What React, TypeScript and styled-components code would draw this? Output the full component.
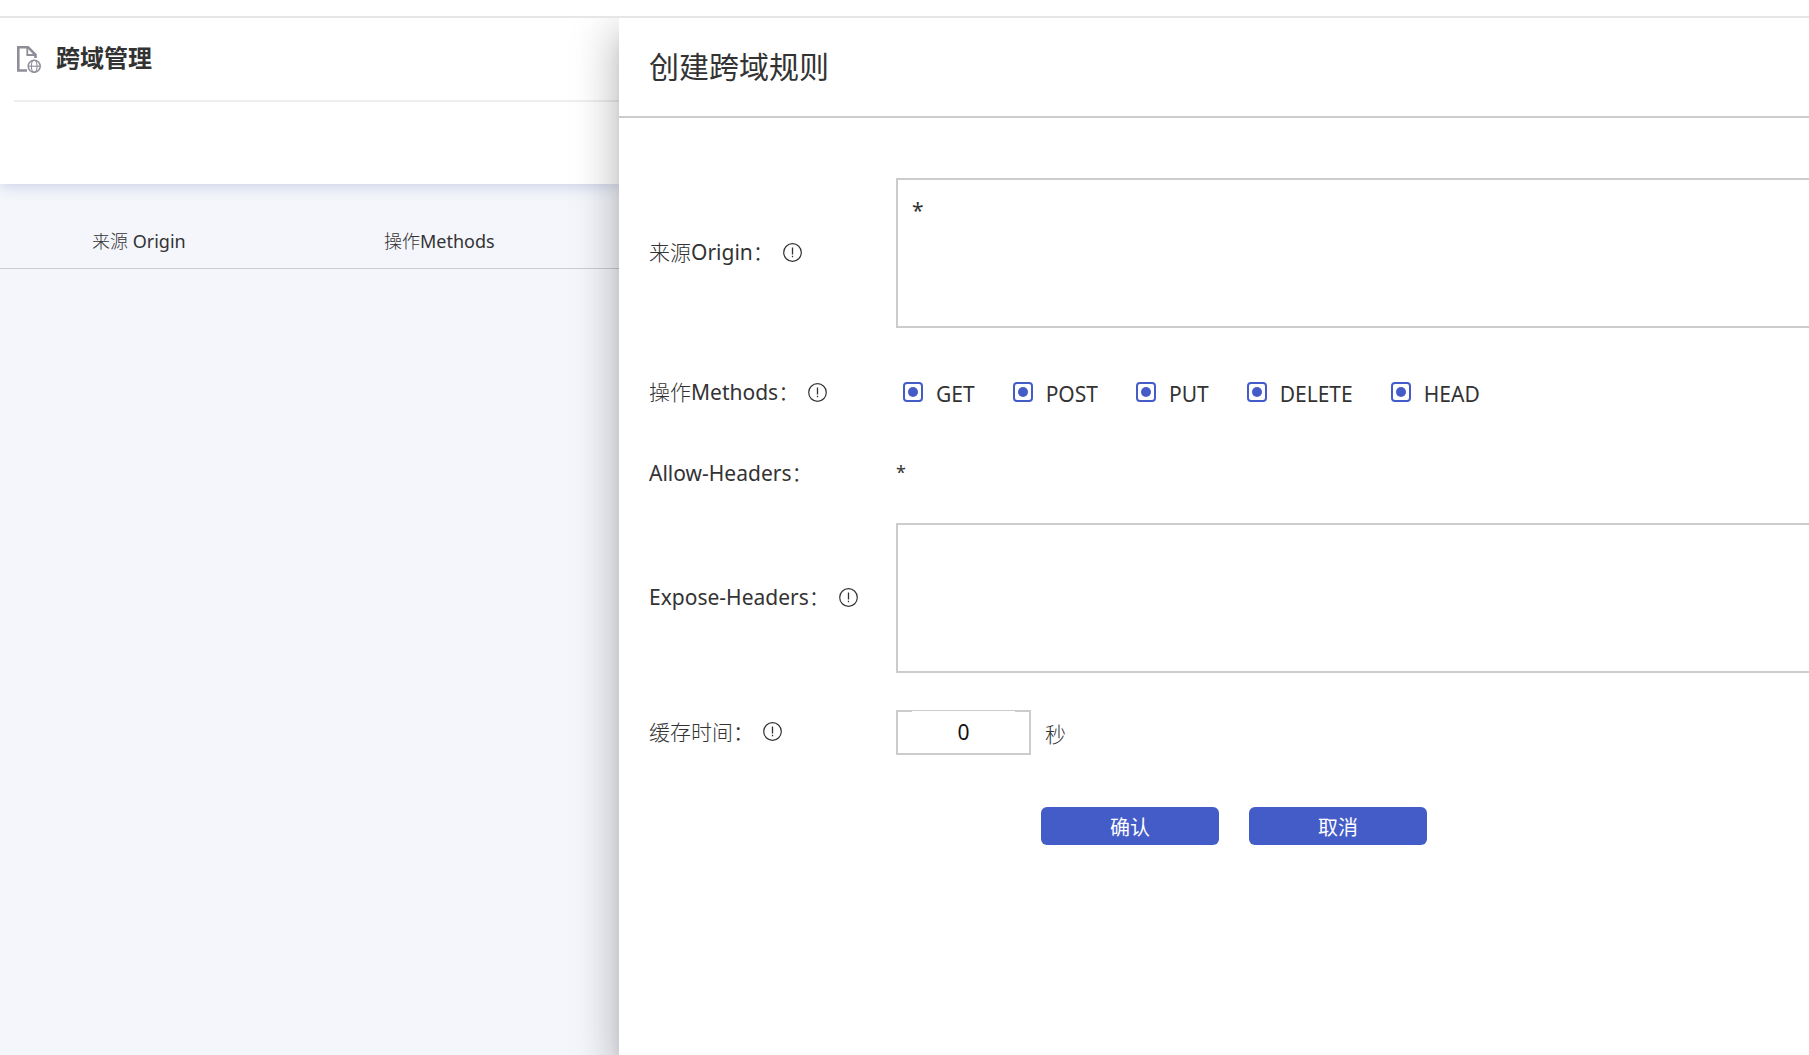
import React, { useState } from "react";
import styled, { createGlobalStyle } from "styled-components";

const GlobalStyle = createGlobalStyle`
  *, *::before, *::after { box-sizing: border-box; }
  body {
    margin: 0;
    background: #fff;
    color: #333;
    font-family: "Noto Sans", "Noto Sans CJK SC Light", "Noto Sans CJK SC", sans-serif;
    font-size: 21px;
  }
`;

const Page = styled.div`
  display: flex;
  flex-direction: column;
  min-height: 100vh;
`;

const TopBar = styled.header`
  height: 18px;
  border-bottom: 2px solid #e6e6e6;
`;

const Body = styled.main`
  flex: 1;
  display: flex;
  overflow: hidden;
`;

const ListPane = styled.section`
  flex: 0 0 619px;
  display: flex;
  flex-direction: column;
  background: #f4f6fb;
`;

const ListHeader = styled.div`
  height: 166px;
  padding-left: 14px;
  background: #fff;
  box-shadow: 0 2px 14px #c9cde6;
`;

const ListTitle = styled.div`
  display: flex;
  align-items: center;
  gap: 14px;
  height: 84px;
  padding-left: 3px;
  border-bottom: 2px solid #eee;
`;

const Heading = styled.h1`
  margin: 0;
  padding-bottom: 4px;
  font-family: "Noto Sans CJK SC", sans-serif;
  font-size: 24px;
  line-height: 36px;
  font-weight: 700;
`;

const RuleTable = styled.table`
  width: 100%;
  table-layout: fixed;
  border-collapse: collapse;
`;

const HeadCell = styled.th`
  height: 84px;
  padding: 31px 0 0 92px;
  border-bottom: 1px solid #ccc;
  font-size: 18px;
  line-height: 24px;
  font-weight: 400;
  text-align: left;
`;

const FirstCol = styled.col`
  width: 292px;
`;

const Drawer = styled.section`
  flex: 1;
  margin-right: -40px;
  background: #fff;
  z-index: 1;
  box-shadow:
    0 12px 15px -8px rgba(0, 0, 0, 0.2),
    0 24px 36px 3px rgba(0, 0, 0, 0.14),
    0 9px 45px 8px rgba(0, 0, 0, 0.12);
`;

const DrawerHeader = styled.div`
  display: flex;
  align-items: center;
  height: 100px;
  padding: 0 0 4px 30px;
  border-bottom: 2px solid #ccc;
`;

const DrawerTitle = styled.h2`
  margin: 0;
  font-family: "Noto Sans CJK SC", sans-serif;
  font-size: 30px;
  line-height: 40px;
  font-weight: 400;
`;

const Form = styled.form`
  padding: 60px 30px 0;
`;

const Rows = styled.div`
  display: grid;
  gap: 37px;
`;

const Row = styled.div<{ $height?: number }>`
  display: grid;
  grid-template-columns: 247px 1fr;
  align-items: center;
  min-height: ${(p) => p.$height ?? 28}px;
`;

const LabelCell = styled.div`
  display: flex;
  align-items: center;
  gap: 9px;
  padding-bottom: 2px;
  line-height: 26px;
`;

const PlainLabel = styled.div`
  padding-top: 2px;
  line-height: 26px;
`;

const TextArea = styled.textarea`
  display: block;
  width: 100%;
  height: 150px;
  padding: 12px 14px;
  border: 2px solid #ccc;
  border-radius: 0;
  outline: none;
  resize: none;
  background: #fff;
  color: #333;
  font: inherit;
  line-height: 36px;
`;

const Methods = styled.div`
  display: flex;
  gap: 38px;
  padding-left: 7px;
`;

const Method = styled.label`
  display: flex;
  align-items: center;
  gap: 13px;
  padding-top: 2px;
  line-height: 28px;
`;

const Tick = styled.input`
  appearance: none;
  display: grid;
  place-items: center;
  width: 20px;
  height: 20px;
  margin: 0 0 4px;
  border: 2px solid #445cc8;
  border-radius: 4px;
  background: #fff;

  &:checked::before {
    content: "";
    width: 10px;
    height: 10px;
    border-radius: 50%;
    background: #445cc8;
  }
`;

const FixedValue = styled.span`
  font-size: 18px;
  line-height: 24px;
`;

const Duration = styled.div`
  display: flex;
  align-items: center;
  gap: 14px;
`;

const NumberBox = styled.div`
  display: flex;
  width: 135px;
  height: 45px;
  padding: 0 14px;
  border: 2px solid #ccc;
`;

const NumberInput = styled.input`
  width: 100%;
  height: 42px;
  margin-top: -1px;
  padding: 0;
  border: 0;
  outline: none;
  background: #fff;
  color: #111;
  font: inherit;
  text-align: center;
`;

const Actions = styled.div`
  display: flex;
  justify-content: center;
  gap: 30px;
  margin-top: 52px;
`;

const ActionButton = styled.button`
  width: 178px;
  height: 38px;
  padding: 2px 0 0;
  border: 0;
  border-radius: 6px;
  background: #445cc8;
  color: #fff;
  font-family: "Noto Sans CJK SC", sans-serif;
  font-size: 20px;
  line-height: 28px;
`;

const FileGlobeIcon = () => (
  <svg width="25" height="27" viewBox="0 0 25 27" fill="none" stroke="#8f8d98" aria-hidden="true">
    <path d="M10 24.5H1.3V1.2H11L18.5 8.8V12" strokeWidth="2.6" />
    <path d="M10.3 1.5V9H18.5" strokeWidth="1.8" />
    <circle cx="17.2" cy="20.2" r="6" strokeWidth="1.5" />
    <ellipse cx="17.2" cy="20.2" rx="2.8" ry="6" strokeWidth="1.1" />
    <path d="M11.2 20.2H23.2" strokeWidth="1.1" />
  </svg>
);

const InfoIcon = () => (
  <svg width="19" height="19" viewBox="0 0 19 19" fill="none" stroke="#333" aria-hidden="true">
    <circle cx="9.5" cy="9.5" r="8.8" strokeWidth="1.2" />
    <path d="M9.5 4.5V11.5M9.5 12.8V14.2" strokeWidth="1.3" />
  </svg>
);

const METHODS = ["GET", "POST", "PUT", "DELETE", "HEAD"];

export default function App() {
  const [origin, setOrigin] = useState("*");
  const [expose, setExpose] = useState("");
  const [maxAge, setMaxAge] = useState("0");

  return (
    <Page>
      <GlobalStyle />
      <TopBar />
      <Body>
        <ListPane>
          <ListHeader>
            <ListTitle>
              <FileGlobeIcon />
              <Heading>跨域管理</Heading>
            </ListTitle>
          </ListHeader>
          <RuleTable>
            <colgroup>
              <FirstCol />
              <col />
            </colgroup>
            <thead>
              <tr>
                <HeadCell scope="col">来源 Origin</HeadCell>
                <HeadCell scope="col">操作Methods</HeadCell>
              </tr>
            </thead>
          </RuleTable>
        </ListPane>
        <Drawer>
          <DrawerHeader>
            <DrawerTitle>创建跨域规则</DrawerTitle>
          </DrawerHeader>
          <Form onSubmit={(e) => e.preventDefault()}>
            <Rows>
              <Row>
                <LabelCell>
                  <label htmlFor="origin">来源Origin：</label>
                  <InfoIcon />
                </LabelCell>
                <TextArea id="origin" value={origin} onChange={(e) => setOrigin(e.target.value)} />
              </Row>
              <Row $height={56} role="group" aria-labelledby="methods">
                <LabelCell>
                  <span id="methods">操作Methods：</span>
                  <InfoIcon />
                </LabelCell>
                <Methods>
                  {METHODS.map((name) => (
                    <Method key={name}>
                      <Tick type="checkbox" defaultChecked />
                      {name}
                    </Method>
                  ))}
                </Methods>
              </Row>
              <Row>
                <PlainLabel>Allow-Headers：</PlainLabel>
                <FixedValue>*</FixedValue>
              </Row>
              <Row>
                <LabelCell>
                  <label htmlFor="expose">Expose-Headers：</label>
                  <InfoIcon />
                </LabelCell>
                <TextArea id="expose" value={expose} onChange={(e) => setExpose(e.target.value)} />
              </Row>
              <Row>
                <LabelCell>
                  <label htmlFor="max-age">缓存时间：</label>
                  <InfoIcon />
                </LabelCell>
                <Duration>
                  <NumberBox>
                    <NumberInput
                      id="max-age"
                      inputMode="numeric"
                      value={maxAge}
                      onChange={(e) => setMaxAge(e.target.value)}
                    />
                  </NumberBox>
                  <span>秒</span>
                </Duration>
              </Row>
            </Rows>
            <Actions>
              <ActionButton type="submit">确认</ActionButton>
              <ActionButton type="button">取消</ActionButton>
            </Actions>
          </Form>
        </Drawer>
      </Body>
    </Page>
  );
}
